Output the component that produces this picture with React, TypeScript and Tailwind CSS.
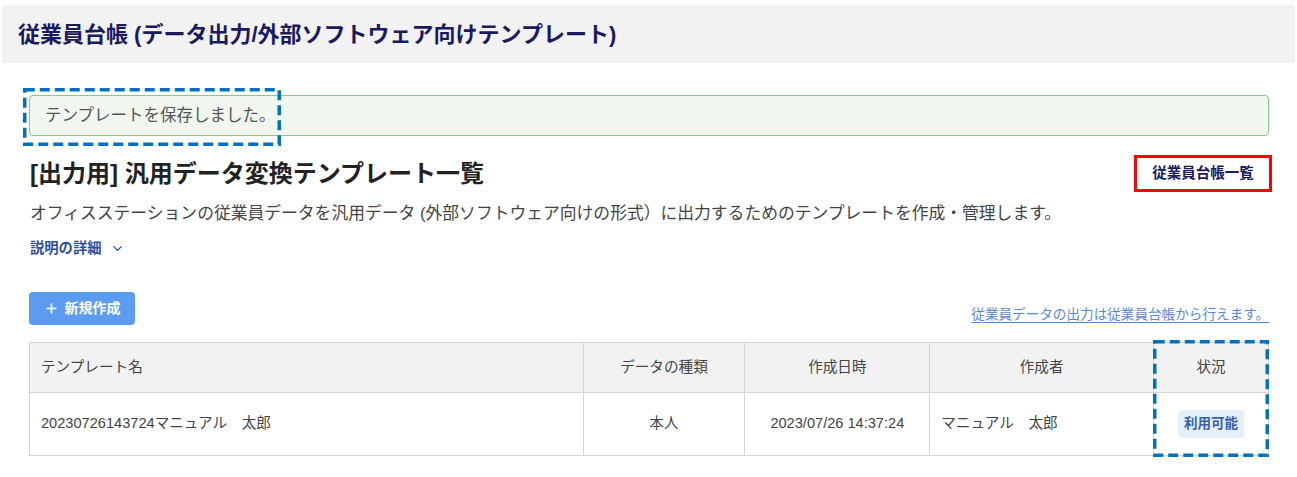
import React from 'react';
import { Plus, ChevronDown } from 'lucide-react';

const font = { fontFamily: '"Liberation Sans", "Noto Sans CJK JP", sans-serif' };

const columns = [
  { label: 'テンプレート名', className: 'w-[554px] text-left pl-[11px]' },
  { label: 'データの種類', className: 'w-[162px] text-center' },
  { label: '作成日時', className: 'w-[185px] text-center' },
  { label: '作成者', className: 'w-[224px] text-center' },
  { label: '状況', className: 'w-[115px] text-center' },
];

// dashed blue callout drawn over the screenshot
const Annotation = ({ className }: { className: string }) => (
  <svg className={`pointer-events-none absolute overflow-visible ${className}`} width="100%" height="100%">
    <rect
      x="1.75"
      y="1.75"
      width="calc(100% - 3.5px)"
      height="calc(100% - 3.5px)"
      fill="none"
      stroke="#0070c0"
      strokeWidth="3.5"
      strokeDasharray="10 5"
    />
  </svg>
);

export default function App() {
  return (
    <div className="min-h-[477px] w-full bg-white" style={font}>
      <header className="mx-[2px] mt-[5px] flex h-[58px] items-center bg-[#f2f2f2] pl-[16px]">
        <h1 className="text-[22px] font-bold text-[#1a1a5c]">従業員台帳 (データ出力/外部ソフトウェア向けテンプレート)</h1>
      </header>

      <main className="pl-[29px] pr-[28px]">
        <div className="relative mt-[32px] flex h-[41px] items-center rounded-[4px] border border-[#82c98a] bg-[#eff7ef] pl-[15px] text-[16.5px] text-[#555]">
          テンプレートを保存しました。
          <Annotation className="-left-[7px] -top-[8px] h-[58px] w-[258px]" />
        </div>

        <div className="mt-[19px] flex h-[37px] items-center justify-between">
          <h2 className="pl-[1px] text-[24px] font-bold text-[#222]">[出力用] 汎用データ変換テンプレート一覧</h2>
          <button className="-mr-[3px] flex h-[37px] w-[138px] items-center justify-center border-[3px] border-[#ff0000] bg-white text-[14.5px] font-bold text-[#1a1a5c]">
            従業員台帳一覧
          </button>
        </div>

        <p className="mt-[10px] pl-[1px] text-[16.8px] leading-[24px] text-[#444]">
          オフィスステーションの従業員データを汎用データ (外部ソフトウェア向けの形式）に出力するためのテンプレートを作成・管理します。
        </p>

        <button className="mt-[12px] flex items-center gap-[9px] pl-[1px] text-[14.3px] font-bold leading-[20px] text-[#2d4f9e]">
          説明の詳細
          <ChevronDown size={15} strokeWidth={2.2} />
        </button>

        <div className="mt-[34px] flex items-end justify-between">
          <button className="flex h-[33px] w-[106px] items-center justify-center gap-[6px] rounded-[4px] bg-[#5b9cf0] text-[14px] font-bold text-white">
            <Plus size={15} strokeWidth={2.6} />
            新規作成
          </button>
          <a className="text-[13.6px] leading-[20px] text-[#5a8ad6] underline underline-offset-[3px]">
            従業員データの出力は従業員台帳から行えます。
          </a>
        </div>

        <div className="relative mt-[17px]">
          <table className="w-full border-collapse text-[14.6px] text-[#444]">
            <thead>
              <tr className="h-[50px] bg-[#f2f2f2]">
                {columns.map((c) => (
                  <th key={c.label} className={`border border-[#d4d4d4] font-normal ${c.className}`}>
                    {c.label}
                  </th>
                ))}
              </tr>
            </thead>
            <tbody>
              <tr className="h-[63px]">
                <td className="border border-[#d4d4d4] pl-[11px]">20230726143724マニュアル　太郎</td>
                <td className="border border-[#d4d4d4] text-center">本人</td>
                <td className="border border-[#d4d4d4] text-center">2023/07/26 14:37:24</td>
                <td className="border border-[#d4d4d4] pl-[11px]">マニュアル　太郎</td>
                <td className="border border-[#d4d4d4] text-center">
                  <span className="inline-block rounded-[4px] bg-[#e4effc] px-[6px] py-[4px] text-[13.5px] font-bold text-[#3b5ea8]">
                    利用可能
                  </span>
                </td>
              </tr>
            </tbody>
          </table>
          <Annotation className="-top-[2px] right-0 h-[117px] w-[116px]" />
        </div>
      </main>
    </div>
  );
}
